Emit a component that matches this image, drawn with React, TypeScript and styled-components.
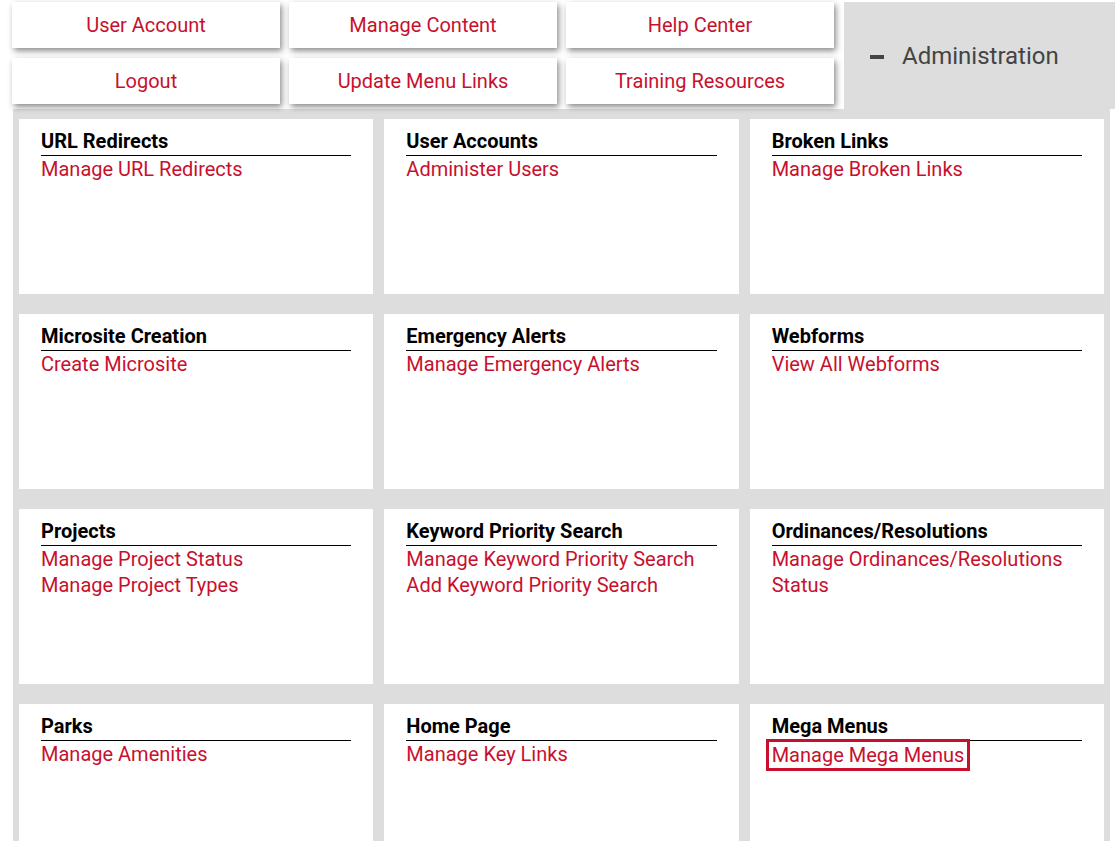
import React from "react";
import styled, { createGlobalStyle } from "styled-components";

const GlobalStyle = createGlobalStyle`
  body {
    margin: 0;
    background: #fff;
    font-family: Roboto, "Liberation Sans", Arial, sans-serif;
  }
`;

const RED = "#c8102e";
const GRAY = "#dddddd";

const Page = styled.div`
  padding: 2px 0 0 12px;
  width: 1103px;
`;

const Header = styled.div`
  display: flex;
  align-items: flex-start;
  gap: 10px;
`;

const QuickLinks = styled.div`
  display: grid;
  grid-template-columns: repeat(3, 268px);
  grid-auto-rows: 46px;
  column-gap: 9px;
  row-gap: 10px;
`;

const QuickButton = styled.a`
  display: flex;
  align-items: center;
  justify-content: center;
  background: #fff;
  color: ${RED};
  font-size: 20px;
  text-decoration: none;
  box-shadow: 2px 3px 6px rgba(0, 0, 0, 0.45);
  cursor: pointer;
`;

const AdminTab = styled.div`
  width: 271px;
  height: 107px;
  background: ${GRAY};
  display: flex;
  align-items: center;
  padding-left: 26px;
  box-sizing: border-box;
  gap: 18px;
  color: #444;
  font-size: 24px;
`;

const MinusIcon = styled.span`
  display: inline-block;
  width: 14px;
  height: 4px;
  background: #444;
  margin-top: 2px;
`;

const Panel = styled.div`
  margin-left: 1px;
  width: 1097px;
  background: ${GRAY};
  padding: 10px 6px 20px;
  box-sizing: border-box;
  display: grid;
  grid-template-columns: repeat(3, 1fr);
  column-gap: 11px;
  row-gap: 20px;
`;

const Card = styled.div`
  background: #fff;
  height: 175px;
  padding: 9px 22px 0;
  box-sizing: border-box;
`;

const CardTitle = styled.h3`
  margin: 0;
  font-size: 20px;
  font-weight: 700;
  line-height: 27px;
  color: #000;
  border-bottom: 1px solid #000;
`;

const LinkList = styled.ul`
  list-style: none;
  margin: 0;
  padding: 0;
`;

const LinkItem = styled.li`
  font-size: 20px;
  line-height: 26px;
`;

const CardLink = styled.a<{ $active?: boolean }>`
  color: ${RED};
  text-decoration: none;
  cursor: pointer;
  ${(p) =>
    p.$active &&
    `
    display: inline-block;
    border: 3px solid ${RED};
    padding: 0 3px;
    margin: -2px 0 0 -6px;
  `}
`;

const quick = [
  "User Account",
  "Manage Content",
  "Help Center",
  "Logout",
  "Update Menu Links",
  "Training Resources",
];

const cards: { title: string; links: string[]; active?: string }[] = [
  { title: "URL Redirects", links: ["Manage URL Redirects"] },
  { title: "User Accounts", links: ["Administer Users"] },
  { title: "Broken Links", links: ["Manage Broken Links"] },
  { title: "Microsite Creation", links: ["Create Microsite"] },
  { title: "Emergency Alerts", links: ["Manage Emergency Alerts"] },
  { title: "Webforms", links: ["View All Webforms"] },
  { title: "Projects", links: ["Manage Project Status", "Manage Project Types"] },
  {
    title: "Keyword Priority Search",
    links: ["Manage Keyword Priority Search", "Add Keyword Priority Search"],
  },
  { title: "Ordinances/Resolutions", links: ["Manage Ordinances/Resolutions Status"] },
  { title: "Parks", links: ["Manage Amenities"] },
  { title: "Home Page", links: ["Manage Key Links"] },
  { title: "Mega Menus", links: ["Manage Mega Menus"], active: "Manage Mega Menus" },
];

export default function App() {
  return (
    <>
      <GlobalStyle />
      <Page>
        <Header>
          <QuickLinks>
            {quick.map((q) => (
              <QuickButton key={q}>{q}</QuickButton>
            ))}
          </QuickLinks>
          <AdminTab>
            <MinusIcon />
            Administration
          </AdminTab>
        </Header>
        <Panel>
          {cards.map((c) => (
            <Card key={c.title}>
              <CardTitle>{c.title}</CardTitle>
              <LinkList>
                {c.links.map((l) => (
                  <LinkItem key={l}>
                    <CardLink $active={c.active === l}>{l}</CardLink>
                  </LinkItem>
                ))}
              </LinkList>
            </Card>
          ))}
        </Panel>
      </Page>
    </>
  );
}
